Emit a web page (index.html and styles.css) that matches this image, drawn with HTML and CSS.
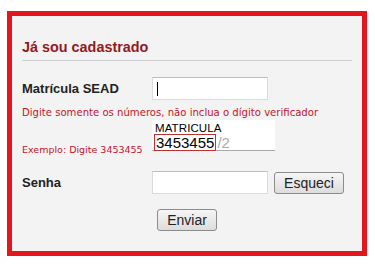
FILE: index.html
```html
<!DOCTYPE html>
<html>
<head>
<meta charset="utf-8">
<link rel="stylesheet" href="styles.css">
</head>
<body>
<div class="box">
  <h2 class="title">Já sou cadastrado</h2>
  <div class="row row-mat">
    <span class="label">Matrícula SEAD</span>
    <div class="input focused"><span class="caret"></span></div>
  </div>
  <div class="hint">Digite somente os números, não inclua o dígito verificador</div>
  <div class="row row-ex">
    <span class="hint ex">Exemplo: Digite 3453455</span>
    <div class="sample">
      <div class="sample-head">MATRICULA</div>
      <div class="sample-num"><span class="num-box">3453455</span><span class="dv">/2</span></div>
    </div>
  </div>
  <div class="row row-pass">
    <span class="label">Senha</span>
    <div class="input"></div>
    <button class="btn esq">Esqueci</button>
  </div>
  <div class="row row-send">
    <button class="btn send">Enviar</button>
  </div>
</div>
</body>
</html>
```
FILE: styles.css
```css
html, body { margin: 0; padding: 0; background: #fff; }
body { font-family: "Liberation Sans", Arial, sans-serif; }
.box {
  margin: 11px 0 0 7px;
  width: 360px;
  height: 245px;
  border: 5px solid #e3171b;
  background: #f3f3f3;
  padding: 0 10px;
  box-sizing: border-box;
  position: relative;
}
.title {
  margin: 23px 0 0 0;
  font-size: 14.4px;
  font-weight: bold;
  color: #931a22;
  line-height: 16px;
  padding-bottom: 5px;
  border-bottom: 1px solid #cfcfcf;
}
.row { display: flex; align-items: center; }
.label {
  font-size: 13px;
  font-weight: bold;
  color: #222;
  width: 130px;
}
.row-mat { margin-top: 16px; }
.input {
  width: 116px;
  height: 23px;
  box-sizing: border-box;
  background: #fff;
  border: 1px solid #dcdcdc;
  border-top-color: #bdbdbd;
  position: relative;
}
.caret {
  position: absolute;
  left: 4px;
  top: 4px;
  width: 1px;
  height: 14px;
  background: #000;
}
.hint {
  font-family: "DejaVu Sans", Verdana, sans-serif;
  font-size: 10.1px;
  color: #c4162a;
  margin-top: 7px;
}
.row-ex { align-items: flex-end; margin-top: 2px; }
.ex { width: 130px; margin-top: 0; margin-bottom: -4px; font-size: 9.5px; }
.sample {
  width: 123px;
  height: 31px;
  background: #fff;
  border-bottom: 1px solid #a9a9a9;
  box-sizing: border-box;
  padding-left: 2px;
  font-family: "Liberation Sans", Arial, sans-serif;
}
.sample-head { font-size: 11.5px; line-height: 12px; color: #000; letter-spacing: 0.1px; padding-top: 2px; padding-left: 1px; }
.sample-num { display: flex; align-items: center; font-size: 15px; line-height: 15px; }
.num-box { border: 1px solid #b33; padding: 0 1px; color: #000; }
.dv { color: #aaa; margin-left: 1px; }
.row-pass { margin-top: 20px; }
.btn {
  font-family: "Liberation Sans", Arial, sans-serif;
  font-size: 14px;
  color: #222;
  background: linear-gradient(#f6f6f6, #dcdcdc);
  border: 1px solid #8c8c8c;
  border-radius: 3px;
  height: 22px;
  padding: 0 8px;
}
.esq { margin-left: 6px; width: 70px; }
.row-send { margin-top: 15px; padding-left: 135px; }
.send { width: 60px; }
```
